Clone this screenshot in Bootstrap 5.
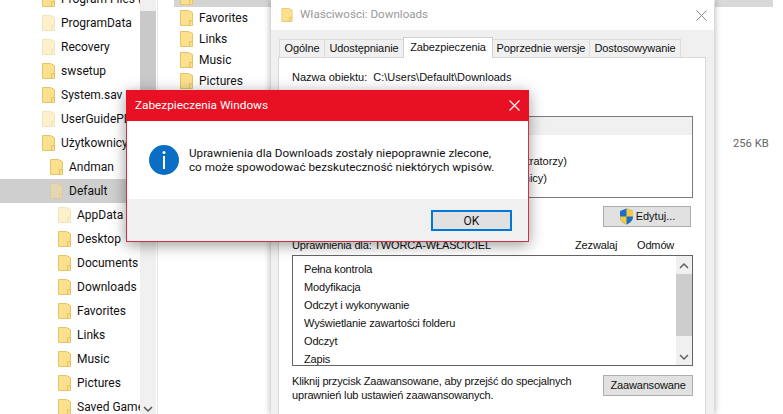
<!DOCTYPE html>
<html lang="pl"><head><meta charset="utf-8"><title>Zabezpieczenia</title>
<link href="https://cdn.jsdelivr.net/npm/bootstrap@5.3.0/dist/css/bootstrap.min.css" rel="stylesheet">
<style>
html,body{margin:0;background:#fff;overflow:hidden}
.desk{position:relative;width:783px;height:414px;overflow:hidden;font-family:Roboto,sans-serif;font-size:12px;color:#111}
.tree{width:140px;margin-top:-13px;flex:none}
.trow{height:24px;display:flex;align-items:center;white-space:nowrap;overflow:hidden}
.trow svg{flex:none;margin-right:6px}
.l1{padding-left:42px}.l2{padding-left:50px}.l3{padding-left:58px}
.sel{background:#cfcfcf}
.ghost svg{opacity:.45}
.sbar{width:16px;flex:none;background:#f0f0f0;height:414px;padding-top:11px;position:relative}
.sthumb{height:194px;background:#c9c9c9}
.sdown{position:absolute;left:3px;bottom:0}
.gap1{width:2px;flex:none;border-right:1px solid #e6e6e6}
.flist{width:113px;flex:none;margin-top:-14px;padding-left:16px}
.frow{height:21px;display:flex;align-items:center;padding-left:6px}
.frow svg{flex:none;margin-right:6px}
.fsel{background:#d4d4d4}
.rpane{margin-left:444px;width:58px;flex:none}
.rsel{height:7px;background:#d9d9d9}
.rsize{color:#666;padding:128px 0 0 18px;line-height:17px;white-space:nowrap;font-size:11.2px}
.prop{position:absolute;left:271px;top:0;width:443px;height:414px;background:#f0f0f0;box-shadow:0 0 7px rgba(0,0,0,.35);font-family:"Liberation Sans",sans-serif;font-size:11px;color:#111}
.ptitle{height:30px;background:#fff;padding-left:10px;color:#999;font-family:Roboto,sans-serif;font-size:11.6px}
.ptitle svg{margin-right:7px}
.pclose{margin-left:auto;margin-right:10px}
.tabbar{height:27px;padding:7px 0 0 8px;align-items:flex-end}
.ptab{height:18px;line-height:17px;background:#f0f0f0;border:1px solid #dcdcdc;border-bottom:0;margin-left:-1px;text-align:center;white-space:nowrap;letter-spacing:-.1px}
.ptab.on{height:21px;background:#fff;line-height:19px;position:relative;top:1px;z-index:1;border-color:#d0d0d0}
.ppanel{margin:0 8px 0 7px;height:370px;background:#fff;border:1px solid #d9d9d9;padding:0 13px;position:relative}
.oname{height:18px;line-height:18px;margin-top:10px;white-space:pre}
.gbox{margin-top:30px;height:82px;border:1px solid #7a7a7a;width:401px;line-height:17px}
.ghead{height:18px;background:#f0f0f0}
.gline{width:274px;text-align:right;white-space:nowrap;height:17px}
.gl1{margin-top:18px}
.gl2{width:254px}
.wbtn{background:#e1e1e1;border:1px solid #adadad;border-radius:0;padding:0;font-size:11px;line-height:1;color:#111;display:flex;align-items:center;justify-content:center}
.bedit{width:88px;height:21px;margin:8px 0 0 311px;gap:2px}
.phead{height:18px;line-height:18px;margin-top:9px;width:401px;white-space:nowrap;position:relative;letter-spacing:-.15px}
.col-a{position:absolute;left:283px}.col-b{position:absolute;left:345px}
.plist{height:111px;width:401px;border:1px solid #646464;margin-top:1px;overflow:hidden}
.plines{flex:1;padding:4px 0 0 11px;line-height:18px;letter-spacing:-.15px}
.pbar{width:16px;background:#f0f0f0;position:relative;padding-top:18px}
.pthumb{height:62px;background:#cdcdcd}
.pup{position:absolute;left:3px;top:5px}.pdn{position:absolute;left:3px;bottom:3px}
.pfoot{margin-top:7px;width:401px}
.ptext{line-height:14px;padding-top:1px;white-space:nowrap;letter-spacing:-.17px}
.badv{width:90px;height:21px;margin-left:auto;margin-top:2px;letter-spacing:-.15px}
.dlg{position:absolute;left:126px;top:90px;width:403px;height:152px;background:#f0f0f0;border:1px solid #d0303f;border-top:0;box-shadow:0 3px 14px rgba(0,0,0,.4);display:flex;flex-direction:column;font-family:Roboto,sans-serif;font-size:11.7px;color:#111}
.dtitle{height:31px;background:#e81123;color:#fff;padding-left:9px;margin:0 -1px;font-size:11.8px}
.dx{margin-left:auto;margin-right:9px}
.dbody{height:78px;background:#fff;padding-left:22px;gap:10px}
.dtext{line-height:14px;white-space:nowrap}
.dfoot{flex:1;padding:11px 16px 0 0;justify-content:flex-end;display:flex;align-items:flex-start}
.bok{width:81px;height:21px;background:#e1e1e1;border:2px solid #0078d7;border-radius:0;padding:0;font-size:12px;color:#111;line-height:1}
</style></head><body>
<svg width="0" height="0" class="position-absolute"><defs>
<symbol id="fold" viewBox="0 0 13 16"><path d="M.5.5h8l4 2v13H.5z" fill="#fde08e" stroke="#e4c46a"/><path d="M9.5 15.500v-5h3" fill="#f7d97f" stroke="#e4c46a"/></symbol>
</defs></svg>
<div class="desk">
 <div class="d-flex">
  <div class="tree">
   <div class="trow l1"><svg width="13" height="16"><use href="#fold"/></svg>Program Files (</div>
   <div class="trow l1 ghost"><svg width="13" height="16"><use href="#fold"/></svg>ProgramData</div>
   <div class="trow l1 ghost"><svg width="13" height="16"><use href="#fold"/></svg>Recovery</div>
   <div class="trow l1"><svg width="13" height="16"><use href="#fold"/></svg>swsetup</div>
   <div class="trow l1"><svg width="13" height="16"><use href="#fold"/></svg>System.sav</div>
   <div class="trow l1 ghost"><svg width="13" height="16"><use href="#fold"/></svg>UserGuidePDF</div>
   <div class="trow l1"><svg width="13" height="16"><use href="#fold"/></svg>Użytkownicy</div>
   <div class="trow l2"><svg width="13" height="16"><use href="#fold"/></svg>Andman</div>
   <div class="trow l2 sel ghost"><svg width="13" height="16"><use href="#fold"/></svg>Default</div>
   <div class="trow l3 ghost"><svg width="13" height="16"><use href="#fold"/></svg>AppData</div>
   <div class="trow l3"><svg width="13" height="16"><use href="#fold"/></svg>Desktop</div>
   <div class="trow l3"><svg width="13" height="16"><use href="#fold"/></svg>Documents</div>
   <div class="trow l3"><svg width="13" height="16"><use href="#fold"/></svg>Downloads</div>
   <div class="trow l3"><svg width="13" height="16"><use href="#fold"/></svg>Favorites</div>
   <div class="trow l3"><svg width="13" height="16"><use href="#fold"/></svg>Links</div>
   <div class="trow l3"><svg width="13" height="16"><use href="#fold"/></svg>Music</div>
   <div class="trow l3"><svg width="13" height="16"><use href="#fold"/></svg>Pictures</div>
   <div class="trow l3"><svg width="13" height="16"><use href="#fold"/></svg>Saved Games</div>
  </div>
  <div class="sbar"><div class="sthumb"></div>
   <svg class="sdown" width="10" height="10" viewBox="0 0 10 10"><path d="M1 3l4 4 4-4" fill="none" stroke="#555" stroke-width="1.5"/></svg></div>
  <div class="gap1"></div>
  <div class="flist">
   <div class="frow fsel"><svg width="13" height="16"><use href="#fold"/></svg></div>
   <div class="frow"><svg width="13" height="16"><use href="#fold"/></svg>Favorites</div>
   <div class="frow"><svg width="13" height="16"><use href="#fold"/></svg>Links</div>
   <div class="frow"><svg width="13" height="16"><use href="#fold"/></svg>Music</div>
   <div class="frow"><svg width="13" height="16"><use href="#fold"/></svg>Pictures</div>
  </div>
  <div class="rpane"><div class="rsel"></div><div class="rsize">256 KB</div></div>
 </div>

 <div class="prop">
  <div class="ptitle d-flex align-items-center">
   <svg width="12" height="14" viewBox="0 0 13 16"><use href="#fold"/></svg>Właściwości: Downloads
   <svg class="pclose" width="11" height="11" viewBox="0 0 11 11"><path d="M.5.5l10 10M10.5.5l-10 10" stroke="#8a8a8a" fill="none"/></svg>
  </div>
  <div class="tabbar d-flex">
   <div class="ptab ms-0" style="width:46px">Ogólne</div>
   <div class="ptab" style="width:80px">Udostępnianie</div>
   <div class="ptab on" style="width:90px">Zabezpieczenia</div>
   <div class="ptab" style="width:98px">Poprzednie wersje</div>
   <div class="ptab" style="width:92px">Dostosowywanie</div>
  </div>
  <div class="ppanel">
   <div class="oname">Nazwa obiektu:  C:\Users\Default\Downloads</div>
   <div class="gbox">
    <div class="ghead"></div>
    <div class="gline gl1">Administratorzy (DESKTOP\Administratorzy)</div>
    <div class="gline gl2">Użytkownicy (DESKTOP\Użytkownicy)</div>
   </div>
   <button class="wbtn bedit" type="button">
    <svg width="15" height="17" viewBox="0 0 15 17"><path d="M7.5.5L14 3v6c0 3.500-3 6-6.500 7.500C4 15 1 12.500 1 9V3z" fill="#1c6fc4"/><path d="M7.500.5L14 3v5.500H7.500zM7.500 8.500V16.500C4 15 1 12.500 1 8.500z" fill="#f7c93c"/></svg>
    Edytuj...</button>
   <div class="phead">Uprawnienia dla: TWORCA-WŁASCICIEL<span class="col-a">Zezwalaj</span><span class="col-b">Odmów</span></div>
   <div class="plist d-flex">
    <div class="plines"><div>Pełna kontrola</div><div>Modyfikacja</div><div>Odczyt i wykonywanie</div><div>Wyświetlanie zawartości folderu</div><div>Odczyt</div><div>Zapis</div></div>
    <div class="pbar"><div class="pthumb"></div>
     <svg class="pup" width="10" height="10" viewBox="0 0 10 10"><path d="M1 7l4-4 4 4" fill="none" stroke="#606060" stroke-width="1.5"/></svg>
     <svg class="pdn" width="10" height="10" viewBox="0 0 10 10"><path d="M1 3l4 4 4-4" fill="none" stroke="#606060" stroke-width="1.5"/></svg>
    </div>
   </div>
   <div class="pfoot d-flex">
    <div class="ptext">Kliknij przycisk Zaawansowane, aby przejść do specjalnych<br>uprawnień lub ustawień zaawansowanych.</div>
    <button class="wbtn badv" type="button">Zaawansowane</button>
   </div>
  </div>
 </div>

 <div class="dlg">
  <div class="dtitle d-flex align-items-center">Zabezpieczenia Windows
   <svg class="dx" width="11" height="11" viewBox="0 0 11 11"><path d="M.5.500l10 10M10.500.500l-10 10" stroke="#fff" fill="none" stroke-width="1.100"/></svg>
  </div>
  <div class="dbody d-flex align-items-center">
   <svg class="flex-none" width="30" height="30" viewBox="0 0 30 30"><circle cx="15" cy="15" r="15" fill="#0a6fc4"/><circle cx="15" cy="7.500" r="1.500" fill="#fff"/><rect x="14" y="11" width="2" height="13" fill="#fff"/></svg>
   <div class="dtext">Uprawnienia dla Downloads zostały niepoprawnie zlecone,<br>co może spowodować bezskuteczność niektórych wpisów.</div>
  </div>
  <div class="dfoot"><button class="bok" type="button">OK</button></div>
 </div>
</div>
</body></html>
